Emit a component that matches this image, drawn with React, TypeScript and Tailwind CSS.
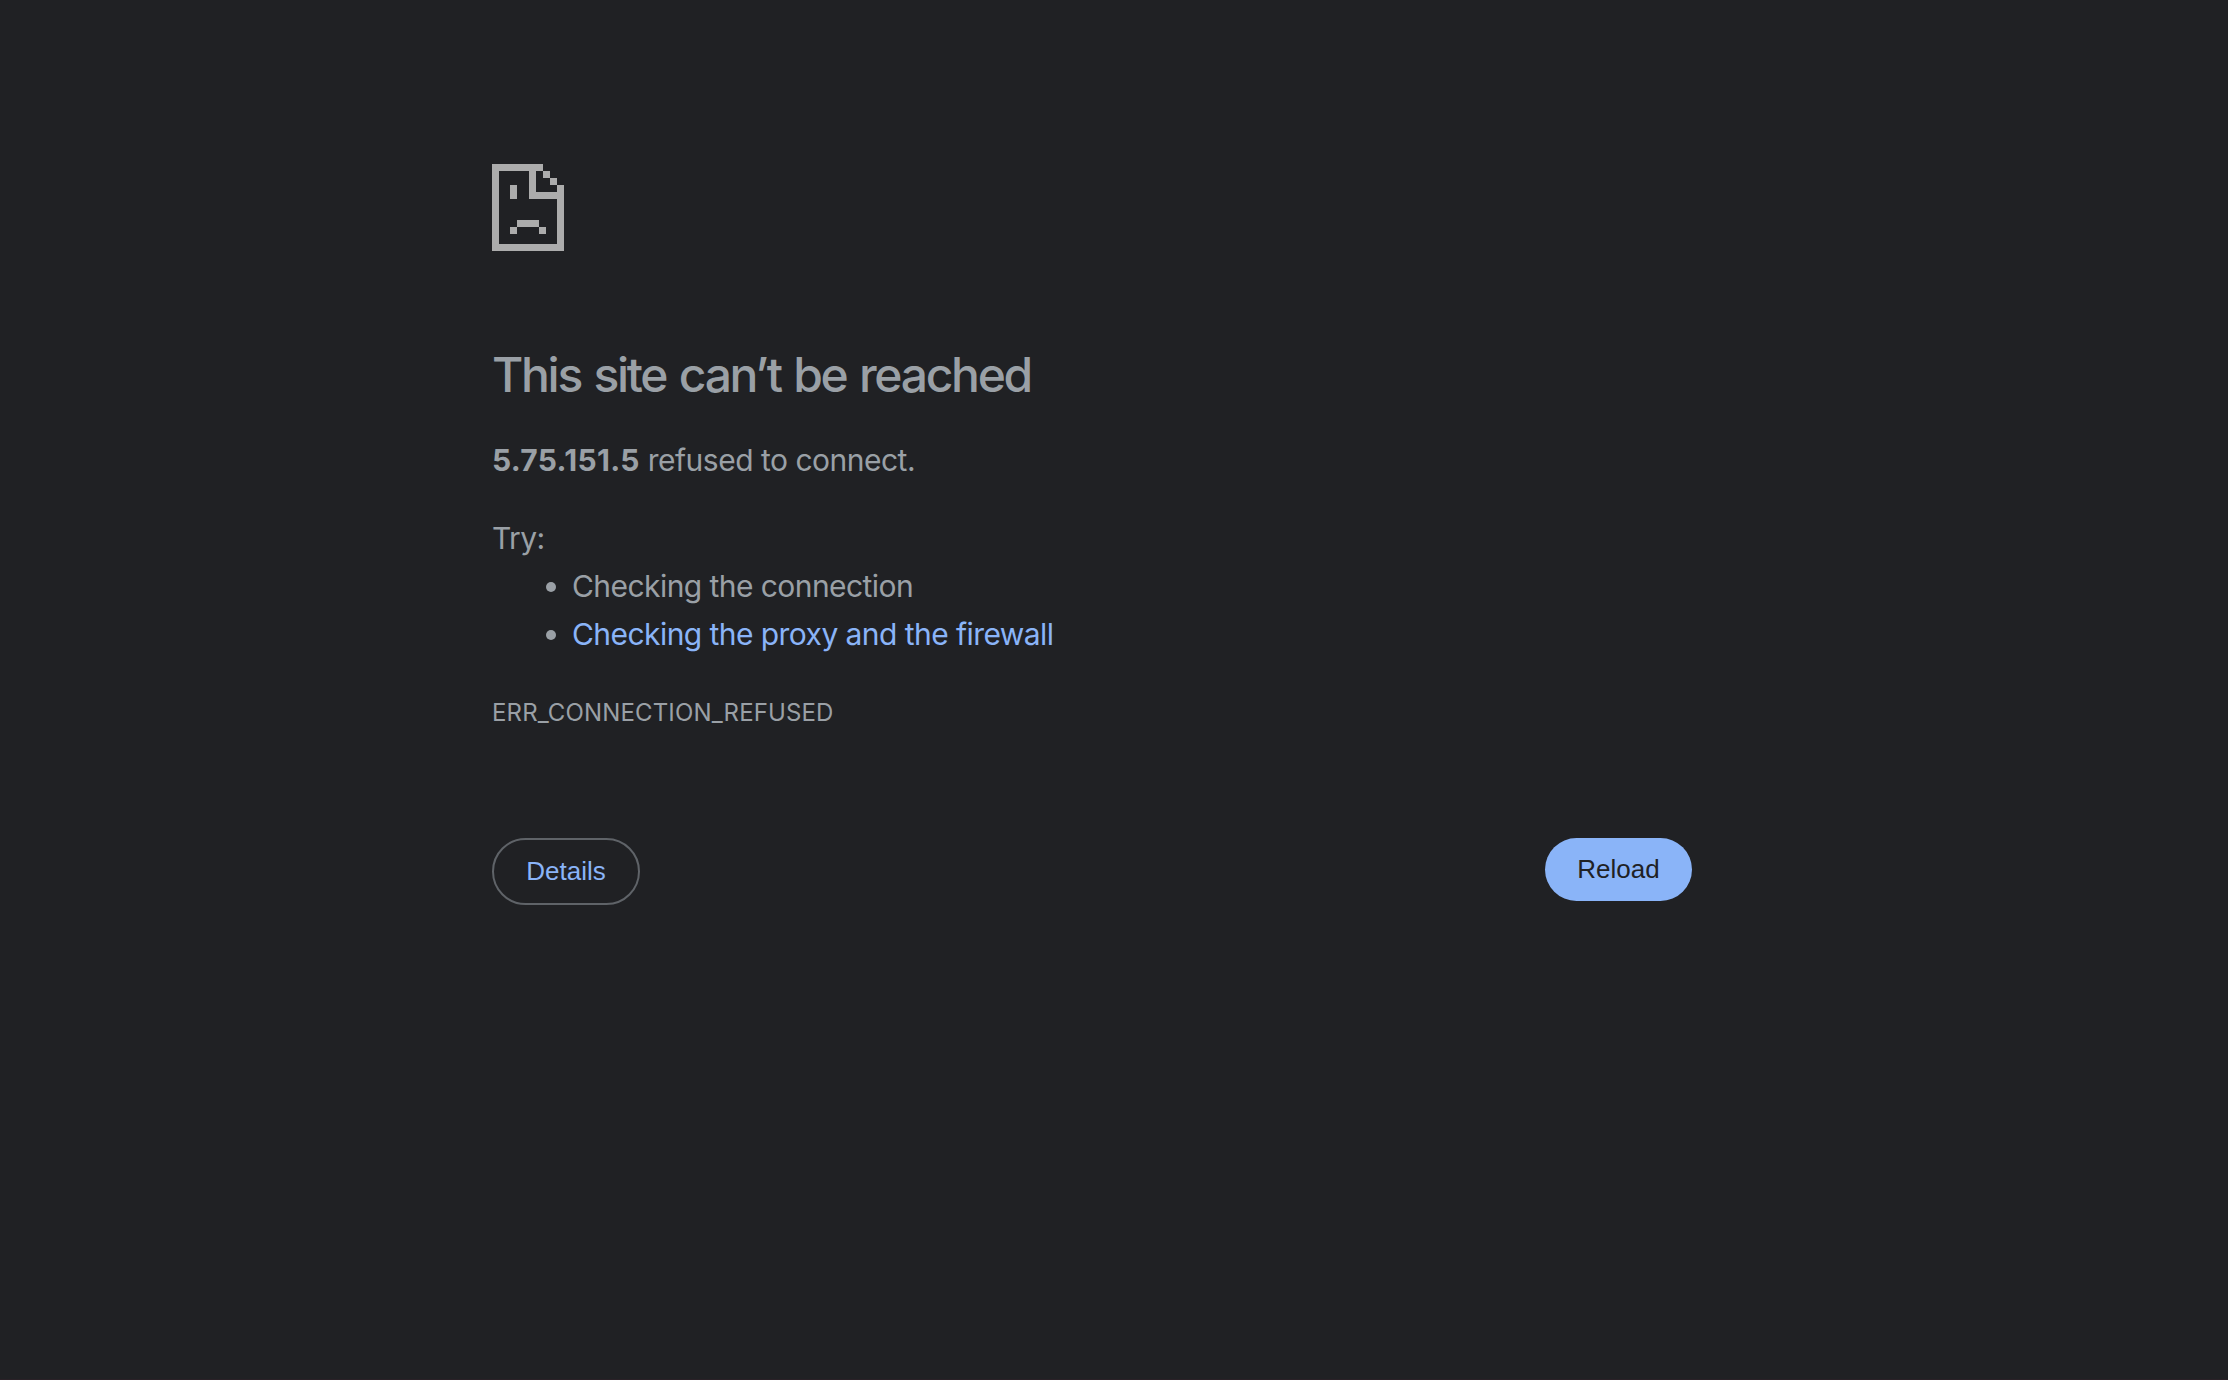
const SUGGESTIONS = [
  { id: 'connection', label: 'Checking the connection', href: '' },
  { id: 'proxy', label: 'Checking the proxy and the firewall', href: '#buttons' },
];

// Sad page icon, drawn from 7px blocks
function SadPageIcon() {
  return (
    <svg
      className="block h-[87px] w-[72px] fill-[#acacac]"
      viewBox="0 0 72 87"
      shapeRendering="crispEdges"
      aria-hidden="true"
    >
      {/* page outline */}
      <path d="M0 0H51V7H44V28H65V21H72V87H0ZM7 7V80H65V35H37V7Z" fillRule="evenodd" />
      {/* folded corner */}
      <path d="M51 7h7v7h-7zM58 14h7v7h-7z" />
      {/* face */}
      <path d="M18 21h7v14h-7zM25 56h22v7h-22zM18 63h7v7h-7zM47 63h7v7h-7z" />
    </svg>
  );
}

export default function App() {
  return (
    <div className="flex h-screen flex-col overflow-hidden border-b border-[#2a2127] bg-[#202124] font-['Inter','Liberation_Sans',sans-serif] text-[#9aa0a6]">
      <main className="ml-[492px] w-[1200px] pt-[164px]">
        <SadPageIcon />

        {/* Message */}
        <h1 className="mt-[95px] text-[48px] leading-[58px] font-medium tracking-[-2.3px] whitespace-nowrap [word-spacing:2px]">
          This site can’t be reached
        </h1>
        <p className="mt-[32px] text-[30px] leading-[48px] tracking-[-0.5px] whitespace-nowrap">
          <strong className="font-bold tracking-[0.3px]">5.75.151.5</strong> refused to connect.
        </p>

        {/* Suggestions */}
        <div className="mt-[30px] text-[30px] leading-[48px] tracking-[-0.56px]">
          <p>Try:</p>
          <ul>
            {SUGGESTIONS.map((item) => (
              <li key={item.id} className="flex items-center pl-[54px] whitespace-nowrap">
                <span className="mt-[2px] mr-[16px] size-[10px] rounded-full bg-[#9aa0a6]" />
                {item.href ? (
                  <a href={item.href} className="text-[#8ab4f8]">
                    {item.label}
                  </a>
                ) : (
                  <span>{item.label}</span>
                )}
              </li>
            ))}
          </ul>
        </div>

        <div className="mt-[31px] text-[24px] leading-[48px] tracking-[0.14px]">
          ERR_CONNECTION_REFUSED
        </div>

        {/* Buttons */}
        <div
          id="buttons"
          className="mt-[101px] flex items-start justify-between font-['Liberation_Sans',Arial,sans-serif] text-[26px]"
        >
          <button className="h-[67px] w-[148px] rounded-full border-2 border-[#5f6368] text-[#8ab4f8]">
            Details
          </button>
          <button className="h-[63px] w-[147px] rounded-full bg-[#8ab4f8] text-[#202124]">
            Reload
          </button>
        </div>
      </main>
    </div>
  );
}
